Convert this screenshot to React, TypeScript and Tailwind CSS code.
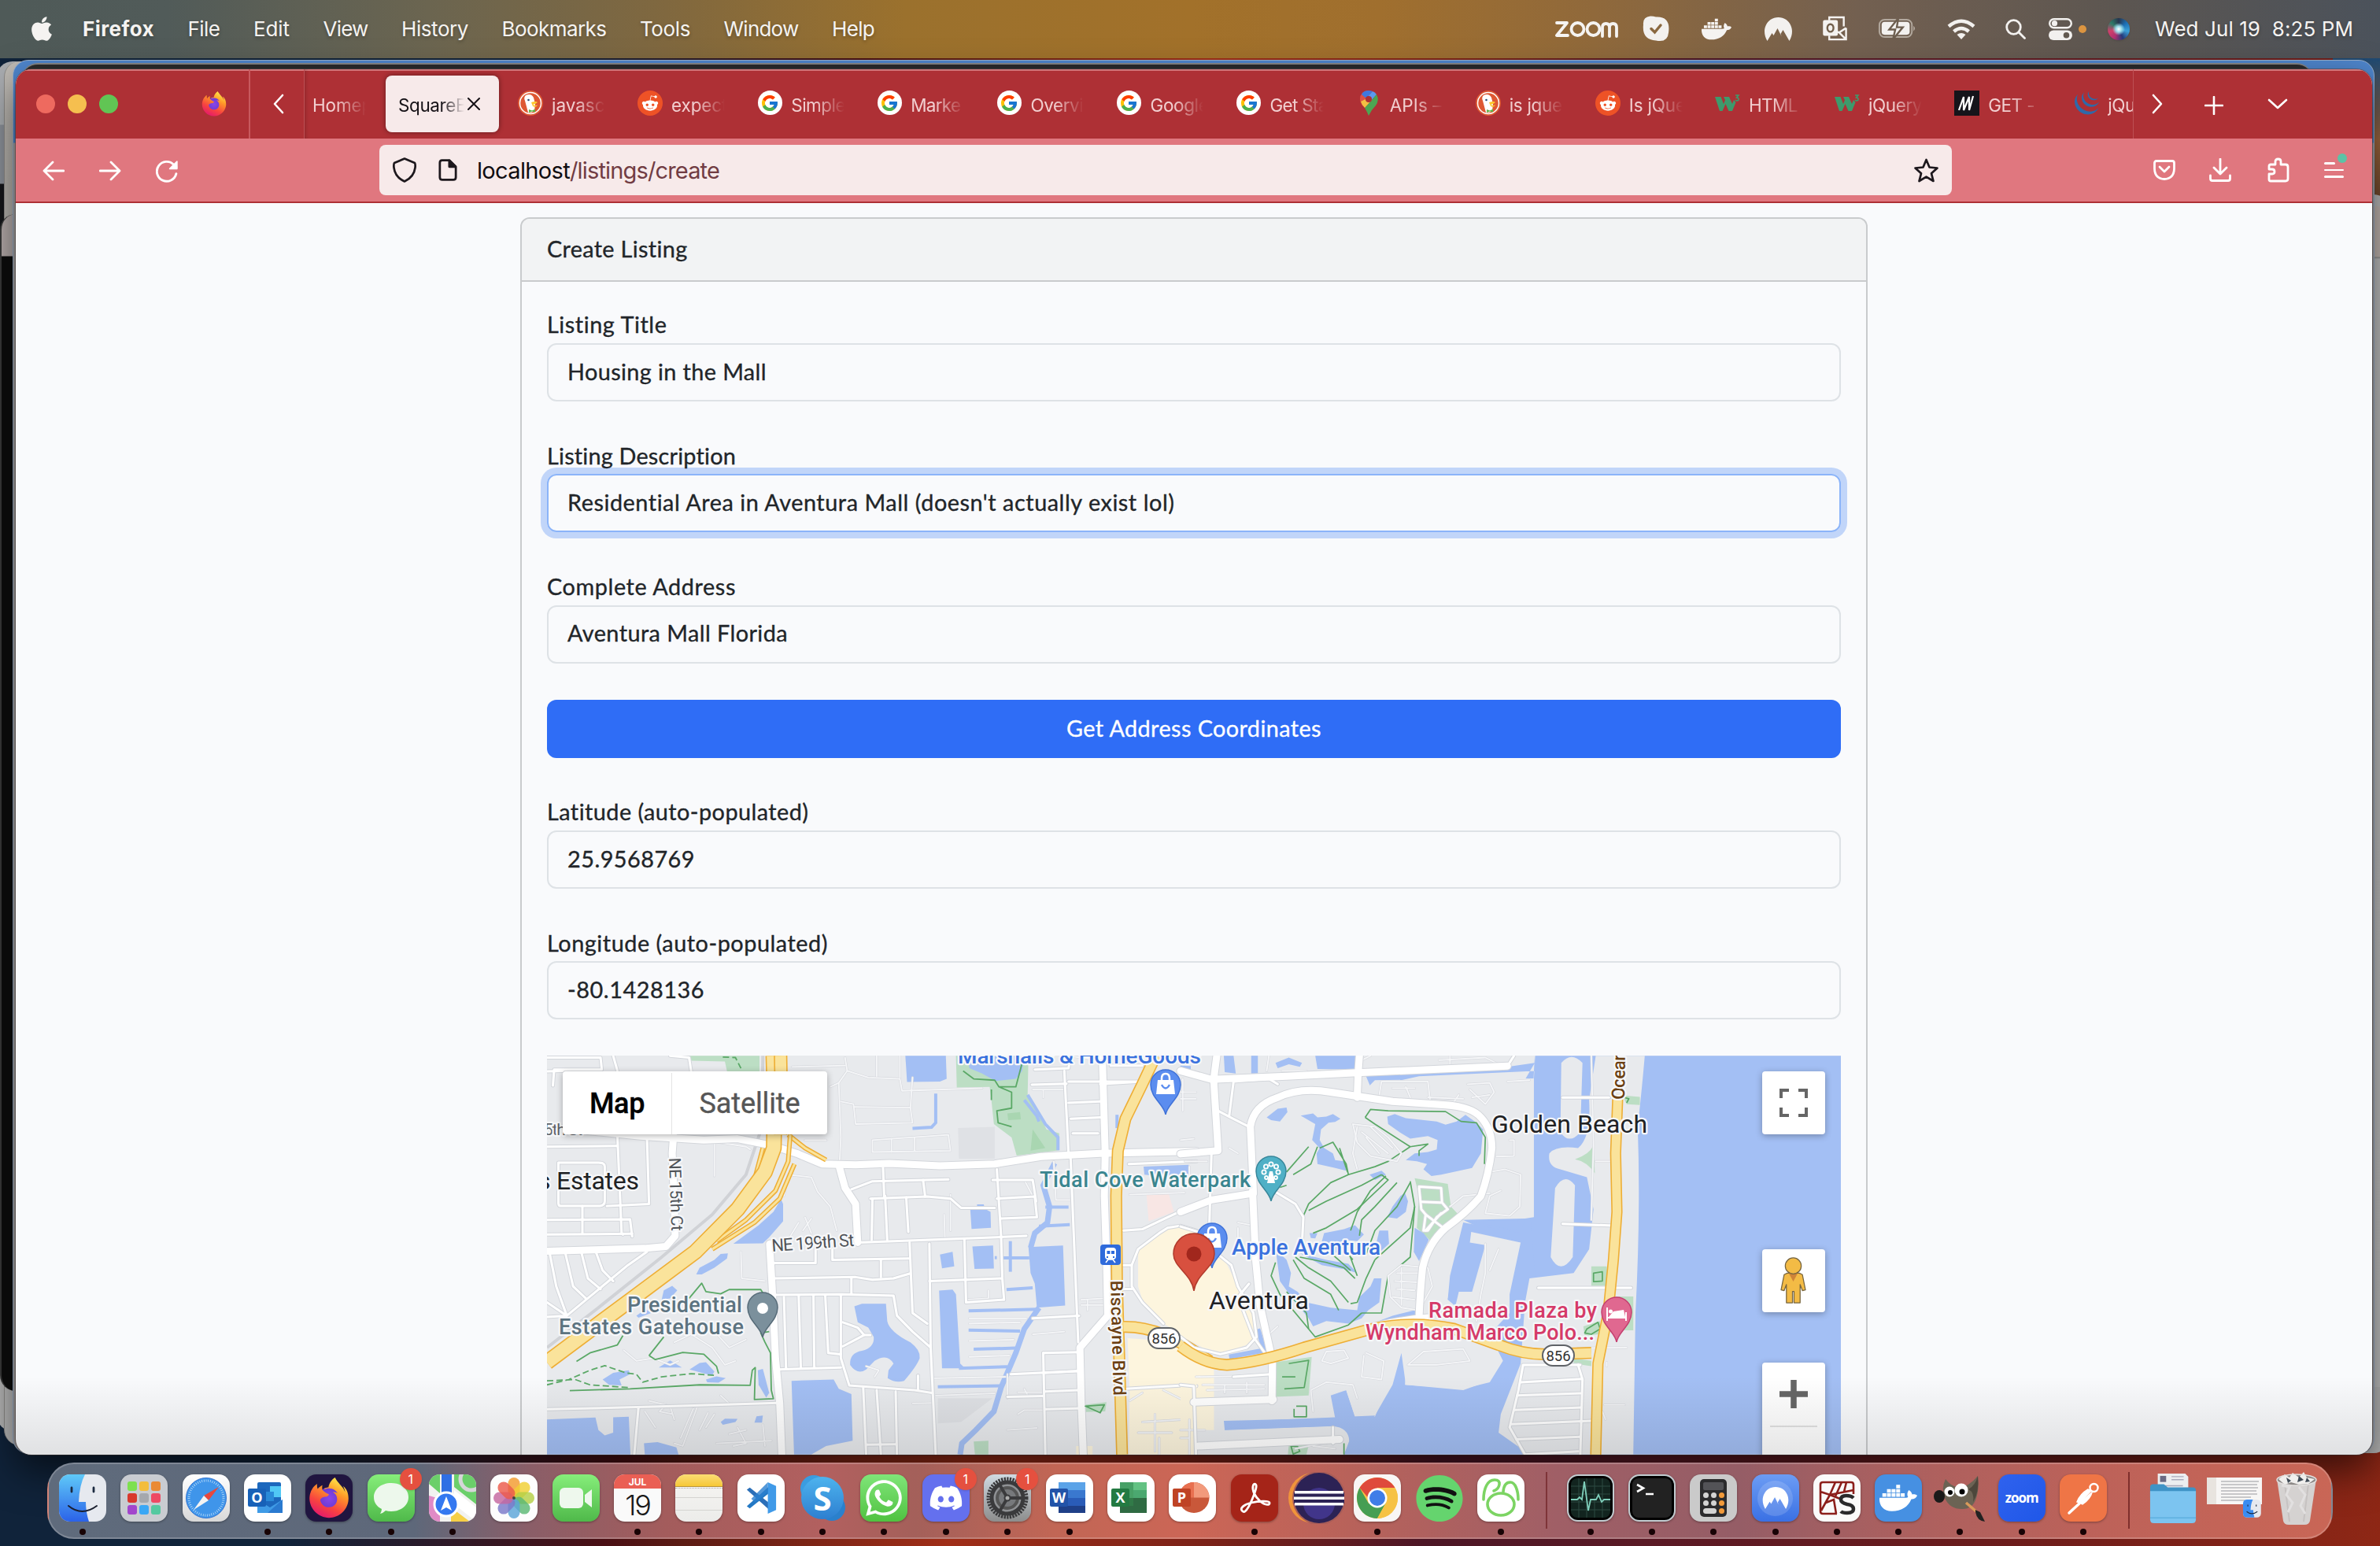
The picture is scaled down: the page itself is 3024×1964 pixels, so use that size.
import React, { useLayoutEffect, useRef, useState } from "react";
import { FaApple, FaDocker, FaRedditAlien, FaWhatsapp, FaDiscord, FaSpotify, FaFirefoxBrowser } from "react-icons/fa";
import { FcGoogle } from "react-icons/fc";
import { SiJquery } from "react-icons/si";

/* Text whose tracking is computed so that the line is exactly `w` pixels wide. */
function Tracked({ w, children, className = "" }: { w: number; children: string; className?: string }) {
  const ref = useRef<HTMLSpanElement>(null);
  const [ls, setLs] = useState(0);
  useLayoutEffect(() => {
    const el = ref.current;
    if (!el) return;
    el.style.letterSpacing = "0px";
    const natural = el.getBoundingClientRect().width;
    const v = (w - natural) / children.length;
    el.style.letterSpacing = v + "px";
    setLs(v);
  }, [w, children]);
  return (
    <span ref={ref} className={"inline-block whitespace-pre " + className} style={{ letterSpacing: ls + "px" }}>
      {children}
    </span>
  );
}

/* ---------- Menu bar ---------- */

const NordPeak = ({ className = "", fill = "#f3f1ef" }: { className?: string; fill?: string }) => (
  <svg viewBox="0 0 36 30" className={className}>
    <path d="M4 30C-2 20 0 9 8 3c6-4 14-4 20 0 8 6 10 17 4 27l-8-14-3 5 1 3-5-10-5 9-2-3z" fill={fill} />
  </svg>
);

function MenuBar() {
  const items: [string, number][] = [["File", 41], ["Edit", 46], ["View", 57], ["History", 85], ["Bookmarks", 133], ["Tools", 64], ["Window", 95], ["Help", 54]];
  return (
    <header className="relative flex h-[74px] items-center justify-between bg-[linear-gradient(90deg,#4f5a58_0%,#515b59_7%,#6b6550_18%,#80683f_28%,#9b712d_38%,#a2712a_50%,#a06f2e_58%,#90693b_67%,#736050_78%,#5c5651_89%,#4b525b_100%)] pb-px pl-[39px] pr-[34px] text-[26px] text-[#f5f3f1] [text-shadow:0_2px_4px_rgba(0,0,0,0.3)]">
      <nav className="flex items-center gap-[42.5px]">
        <div className="flex items-center gap-[38px]">
          <FaApple className="h-[35px] w-[28px]" />
          <Tracked w={91} className="font-bold">Firefox</Tracked>
        </div>
        {items.map(([t, w]) => <Tracked key={t} w={w}>{t}</Tracked>)}
      </nav>
      <div className="flex items-center">
        <svg viewBox="0 0 80 22" className="h-[22px] w-[80px]" fill="none" stroke="#f5f3f1" strokeWidth="3.800" strokeLinejoin="round" strokeLinecap="round">
          <path d="M2 3h13L2 19h14" />
          <circle cx="28.500" cy="11" r="8" />
          <circle cx="48.500" cy="11" r="8" />
          <path d="M60 20V9q0-5 4.500-5T69 9v11M69 9q0-5 4.500-5T78 9v11" />
        </svg>
        <svg viewBox="0 0 34 32" className="ml-[31px] h-[33px] w-[34px]">
          <path d="M10 0q-10 1-9 11Q-1 30 17 31q15 3 16-10Q36 0 17 1q-3-1-7-1z" fill="#f3f1ef" />
          <path d="M11 16l4.500 4.500 7.500-9" fill="none" stroke="#8a6840" strokeWidth="3.500" strokeLinecap="round" />
        </svg>
        <FaDocker className="ml-[41px] h-[40px] w-[38px]" />
        <NordPeak className="ml-[41px] h-[30px] w-[37px]" />
        <svg viewBox="0 0 34 34" className="ml-[37px] h-[33px] w-[34px]" fill="none" stroke="#f5f3f1" strokeWidth="2.500">
          <path d="M9 6V2h19v12M31 16v15H9v-5M31 16l-9 6-5-2M22 22l9 9" />
          <rect x="2" y="7" width="17" height="18" rx="1" fill="#f3f1ef" />
          <ellipse cx="10.500" cy="16" rx="4" ry="5" stroke="#72604d" />
        </svg>
        <svg viewBox="0 0 50 26" className="ml-[37px] h-[25px] w-[50px]">
          <rect x="1" y="1" width="43" height="23" rx="7" fill="none" stroke="#b3a99e" strokeWidth="2" />
          <rect x="4" y="4" width="37" height="17" rx="4" fill="#f3f1ef" />
          <path d="M46 9q4 3.500 0 7z" fill="#b3a99e" />
          <path d="M26-1L14 14h8l-3 13L32 11h-8z" fill="#f3f1ef" stroke="#6d5e4f" strokeWidth="2.500" />
        </svg>
        <svg viewBox="0 0 36 26" className="ml-[38px] h-[26px] w-[36px]" fill="none" stroke="#f3f1ef" strokeWidth="4.500">
          <path d="M2 9.500Q18-4 34 9.500M8.500 16Q18 8 27.500 16" />
          <path d="M12.500 20Q18 16 23.500 20L18 26z" fill="#f3f1ef" stroke="none" />
        </svg>
        <svg viewBox="0 0 26 26" className="ml-[38px] h-[26px] w-[26px]" fill="none" stroke="#f3f1ef" strokeWidth="2.800" strokeLinecap="round">
          <circle cx="10.500" cy="10.500" r="8.800" /><path d="M17 17l7.500 7.500" />
        </svg>
        <svg viewBox="0 0 30 28" className="ml-[29px] h-[28px] w-[30px]">
          <rect x="1.200" y="1.200" width="27.600" height="11" rx="5.500" fill="none" stroke="#f3f1ef" strokeWidth="2.400" />
          <circle cx="7.500" cy="6.700" r="3.600" fill="#f3f1ef" />
          <rect x="0" y="15.500" width="30" height="12.500" rx="6.200" fill="#f3f1ef" />
          <circle cx="22.500" cy="21.700" r="3.800" fill="#62594f" />
        </svg>
        <div className="ml-[8px] size-[10px] rounded-full bg-[#dc9540]" />
        <div className="ml-[27px] size-[28px] rounded-full bg-[radial-gradient(circle_at_50%_50%,#fff_0,#9adbe8_18%,transparent_40%),conic-gradient(from_0deg,#27354d,#1c6fb5,#3aa0d8,#253a7a,#b03070,#d0406a,#2f7a68,#27354d)] shadow" />
        <Tracked w={252} className="ml-[32px]">{"Wed Jul 19  8:25 PM"}</Tracked>
      </div>
    </header>
  );
}

/* ---------- Browser tabs ---------- */

const DuckIcon = () => (
  <svg viewBox="0 0 32 32" className="size-8 shrink-0">
    <circle cx="16" cy="16" r="16" fill="#de5833" />
    <circle cx="16" cy="16" r="13.500" fill="none" stroke="#fff" strokeWidth="1.500" />
    <path d="M10 6q7-3 10 3l2 8-1 9q-5 3-8 2L9 13q-2-4 1-7z" fill="#fff" />
    <circle cx="13.500" cy="12" r="1.300" fill="#2b4f78" />
    <path d="M17 15q6-2 8 0-2 2-6 3 4 2 6 0-1 4-6 2z" fill="#fdc82f" />
    <path d="M14 24l4 1.500 4-2v4l-4-1-4 1.500z" fill="#5fb444" />
  </svg>
);
const RedditIcon = () => (
  <span className="flex size-8 shrink-0 items-center justify-center rounded-full bg-[#ee5226]"><FaRedditAlien className="size-[22px] text-white" /></span>
);
const GoogleIcon = () => (
  <span className="flex size-[31px] shrink-0 items-center justify-center rounded-full bg-white"><FcGoogle className="size-[24px]" /></span>
);
const PinIcon = () => (
  <svg viewBox="0 0 32 32" className="size-8 shrink-0">
    <path d="M16 0Q5 1 5 11q0 4 4 9l4-6z" fill="#de5145" /><path d="M16 0Q9 0 7 5l6 5 8-9q-2-1-5-1z" fill="#4078e0" />
    <path d="M21 1l-9 10 8 1 6-7q-2-3-5-4z" fill="#5a9af0" /><path d="M20 12l6-7q4 7-1 14-6 6-9 13-2-5-5-10z" fill="#4ca552" />
    <path d="M6 14q1 4 5 8l9-10-8-1z" fill="#f3bf43" /><circle cx="16" cy="11" r="4" fill="#ae3035" />
  </svg>
);
const W3Icon = () => (
  <svg viewBox="0 0 32 32" className="size-8 shrink-0" fill="#3e9a6c">
    <path d="M0 8h7.500l3.500 9 2-5-2-4h7l4 9 2-5 2.500 3-4.500 11h-4.500l-4-9-4 9H6z" />
    <path d="M26 6h4l-2.500 3q3 0 2.500 3-2 2-4 0" fill="none" stroke="#3e9a6c" strokeWidth="1.600" />
  </svg>
);
const MdnIcon = () => (
  <span className="flex size-8 shrink-0 items-center justify-center bg-[#15141a]">
    <svg viewBox="0 0 22 20" className="h-5 w-[22px]" fill="none" stroke="#fff" strokeWidth="2.200"><path d="M1 19L7 2v17L14 2v17l5-18" /></svg>
  </span>
);
const JqIcon = () => <SiJquery className="size-[31px] shrink-0 text-[#2f69a8]" />;

const tabs: [React.ComponentType, string, number][] = [
  [DuckIcon, "javascr", 76], [RedditIcon, "expect", 71], [GoogleIcon, "Simple", 69], [GoogleIcon, "Marke", 63], [GoogleIcon, "Overvi", 67], [GoogleIcon, "Google", 74],
  [GoogleIcon, "Get Sta", 73], [PinIcon, "APIs –", 66], [DuckIcon, "is jque", 67], [RedditIcon, "Is jQue", 72], [W3Icon, "HTML", 62], [W3Icon, "jQuery", 68], [MdnIcon, "GET -", 59], [JqIcon, "jQuery", 68],
];

const fade = "[mask-image:linear-gradient(90deg,#000_45%,transparent_100%)]";

const FirefoxLogo = ({ className }: { className: string }) => (
  <span className={"relative inline-flex shrink-0 items-center justify-center " + className}>
    <svg className="absolute size-0"><defs>
      <linearGradient id="fx" x1="0.8" y1="0" x2="0.3" y2="1"><stop offset="0" stopColor="#fff44f" /><stop offset="0.35" stopColor="#ff9a28" /><stop offset="0.7" stopColor="#f8443f" /><stop offset="1" stopColor="#e3186e" /></linearGradient>
    </defs></svg>
    <span className="absolute size-[55%] translate-y-[2%] rounded-full bg-[radial-gradient(circle,#8a45e8,#5a35c8)]" />
    <FaFirefoxBrowser className="relative size-full" fill="url(#fx)" />
  </span>
);

function TabStrip() {
  return (
    <div className="flex h-[88px] shrink-0 items-stretch bg-[#ae3035] text-[22.500px] shadow-[inset_0_2px_0_#d2777b]">
      <div className="flex w-[298px] items-center border-r-2 border-[#c8595e] pl-[26px]">
        <i className="size-[24px] rounded-full bg-[#ee6a5f]" />
        <i className="ml-[16px] size-[24px] rounded-full bg-[#f5bf4f]" />
        <i className="ml-[16px] size-[24px] rounded-full bg-[#61c554]" />
        <FirefoxLogo className="ml-[106px] size-[32px]" />
      </div>
      <div className="flex w-[69px] items-center justify-center border-r border-[#bd5054] pl-[4px]">
        <svg viewBox="0 0 14 26" className="h-[26px] w-[14px]" fill="none" stroke="#fff" strokeWidth="2.600" strokeLinecap="round" strokeLinejoin="round"><path d="M12 2L2 13l10 11" /></svg>
      </div>
      <div className="flex min-w-0 flex-1 items-center overflow-hidden shadow-[inset_4px_0_4px_-2px_rgba(0,0,0,0.15)]">
        <div className="w-[99px] shrink-0 overflow-hidden pl-[10px] pt-[3px]">
          <div className={"w-[68px] overflow-hidden text-[#f2cfd0] " + fade}><Tracked w={76}>Homep</Tracked></div>
        </div>
        <div className="flex w-[152px] shrink-0 justify-center">
          <div className="flex h-[72px] w-[144px] items-center rounded-[8px] bg-[#f7eaea] pl-[16px] pt-[3px] text-[#151116] shadow-[0_0_6px_rgba(0,0,0,0.45)]">
            <div className="w-[84px] overflow-hidden [mask-image:linear-gradient(90deg,#000_65%,transparent_100%)]"><Tracked w={86}>SquareE</Tracked></div>
            <svg viewBox="0 0 16 16" className="mb-[4px] ml-[4px] size-[16px]" stroke="#151116" strokeWidth="2" strokeLinecap="round"><path d="M1 1l14 14M15 1L1 15" /></svg>
          </div>
        </div>
        {tabs.map(([Icon, t, w], i) => (
          <div key={i} className="flex w-[152.100px] shrink-0 items-center pl-[20px]">
            <span className="mb-[3px] flex w-8 justify-center"><Icon /></span>
            <div className={"ml-[11px] mt-[3px] w-[68px] overflow-hidden text-[#f2cfd0] " + fade}><Tracked w={w}>{t}</Tracked></div>
          </div>
        ))}
      </div>
      <div className="flex w-[304px] items-center border-l border-[#bd5054] pl-[23px]">
        <svg viewBox="0 0 14 26" className="h-[26px] w-[14px]" fill="none" stroke="#fff" strokeWidth="2.600" strokeLinecap="round" strokeLinejoin="round"><path d="M2 2l10 11L2 24" /></svg>
        <svg viewBox="0 0 24 24" className="ml-[53px] mt-[3px] size-[24px]" stroke="#fff" strokeWidth="2.600" strokeLinecap="round"><path d="M12 1v22M1 12h22" /></svg>
        <svg viewBox="0 0 26 14" className="ml-[56px] h-[14px] w-[26px]" fill="none" stroke="#fff" strokeWidth="2.600" strokeLinecap="round" strokeLinejoin="round"><path d="M2 2l11 10L24 2" /></svg>
      </div>
    </div>
  );
}

function Toolbar() {
  const line = { fill: "none", stroke: "#fff", strokeWidth: 2.8, strokeLinecap: "round" as const, strokeLinejoin: "round" as const };
  return (
    <div className="flex h-[82px] shrink-0 items-center border-b-2 border-[#ae3035] bg-[#e0777f] pl-[34px]">
      <svg viewBox="0 0 28 26" className="mt-[2px] h-[26px] w-[28px]" {...line}><path d="M27 13H2M13 2L2 13l11 11" /></svg>
      <svg viewBox="0 0 28 26" className="ml-[44px] mt-[2px] h-[26px] w-[28px]" {...line}><path d="M1 13h25M15 2l11 11-11 11" /></svg>
      <svg viewBox="0 0 28 28" className="ml-[44px] mt-[3px] size-[29px]" {...line}><path d="M25 17a12 12 0 1 1-3-11l3 3" /><path d="M26 2v9h-9z" fill="#fff" strokeWidth="1.500" /></svg>
      <div className="ml-[255px] flex h-[64px] w-[1998px] items-center rounded-[8px] bg-[#f7eaea] pl-[17px] pr-[16px] text-[29px]">
        <svg viewBox="0 0 30 32" className="h-[32px] w-[30px]" fill="none" stroke="#1d181d" strokeWidth="2.700" strokeLinejoin="round"><path d="M15 1.500L28 7q1 2 .5 6Q27 25 15 30.500 3 25 1.500 13 1 9 2 7z" /></svg>
        <svg viewBox="0 0 26 30" className="ml-[28px] h-[28px] w-[24px]" fill="none" stroke="#1d181d" strokeWidth="3" strokeLinejoin="round"><path d="M5 1.500h10l9 9V25q0 3.500-3.500 3.500h-15Q2 28.500 2 25V5q0-3.500 3-3.500z" /><path d="M15 2v8.500h8.500z" fill="#1d181d" /></svg>
        <div className="ml-[25px] mt-[2px] flex"><Tracked w={118} className="text-[#100c10]">localhost</Tracked><Tracked w={190} className="text-[#713c43]">/listings/create</Tracked></div>
        <svg viewBox="0 0 32 31" className="ml-auto h-[31px] w-[33px]" fill="none" stroke="#1d181d" strokeWidth="2.700" strokeLinejoin="round"><path d="M16 2l4 9.500 10 1-7.500 6.800L25 29l-9-5.300L7 29l2.500-9.700L2 12.500l10-1z" /></svg>
      </div>
      <svg viewBox="0 0 28 26" className="ml-[256px] h-[26px] w-[28px]" {...line}><path d="M4 1.500h20q2.500 0 2.500 2.500v7.500Q26 24 14 24.500 2 24 1.500 11.500V4q0-2.500 2.500-2.500zM8 9l6 6 6-6" /></svg>
      <svg viewBox="0 0 28 30" className="ml-[43px] h-[30px] w-[28px]" {...line}><path d="M14 1v19M6 12l8 8 8-8M1.500 22v4q0 2.500 2.500 2.500h20q2.500 0 2.500-2.500v-4" /></svg>
      <svg viewBox="0 0 28 32" className="ml-[46px] h-[32px] w-[28px]" {...line}><path d="M10 9V5q0-3 3.500-3T17 5v4h6q3 0 3 3v15q0 3-3 3H4q-2 0-2-2v-7h4q3 0 3-3t-3-3H2v-4q0-2 2-2z" /></svg>
      <div className="relative ml-[44px] flex h-[20px] w-[25px] flex-col justify-between">
        <i className="h-[2.600px] w-[14px] rounded bg-white" /><i className="h-[2.600px] rounded bg-white" /><i className="h-[2.600px] rounded bg-white" />
        <i className="absolute -top-[11px] left-[17px] size-[12px] rounded-full bg-[#5cc3a6]" />
      </div>
    </div>
  );
}

/* ---------- Map ---------- */

const WATER = "#a3bff4", PARK = "#bcdec4", TRAIL = "#5aa866";

/* West part of the map. */
const westWater = [
  "M878 33H974L976 120 960 130 882 132z",
  "M583 572L588 590V655L555 715 540 738 470 740 500 705 530 670 565 620z",
  "M382 855L390 830 425 800 440 778 457 776 455 795 425 830 395 855z",
  "M305 915L325 898 337 915 320 945 300 950z", "M240 1010L262 985 275 1000 245 1018z",
  "M960 780L990 770 994 825 965 832z", "M1037 750L1086 746 1088 833 1042 834z",
  "M1032 612L1048 610V592H1064L1066 608 1080 620 1081 680 1035 684z",
  "M1170 752L1252 746 1257 972 1190 980 1185 890 1175 850z",
  "M958 916L990 912 998 930 1008 1190 1020 1208 965 1208z",
  "M757 975L775 965H832L835 1030Q840 1070 890 1110 915 1140 912 1170 905 1200 875 1255 855 1265 836 1245L838 1215 850 1190Q835 1150 805 1180L785 1212Q765 1235 747 1195 745 1150 775 1142 805 1130 803 1090L790 1055 765 1035z",
  "M608 1255L708 1250 720 1285 750 1305 753 1480 690 1500 655 1532H614z",
  "M28 1400L143 1393 150 1440 165 1460 185 1450V1392L222 1390 226 1532H28z",
  "M258 1490L290 1485 335 1505 340 1532H260z",
  "M160 1250L185 1225 222 1215 225 1230 200 1250 205 1272 175 1270z",
  "M293 1205L320 1178 348 1205z", "M366 1212L390 1188 405 1185 425 1220 420 1235 395 1225z", "M405 1250L430 1238 452 1245 435 1262 408 1260z",
  "M528 1215L540 1210 555 1300 548 1318 530 1270z", "M440 1410L450 1397 480 1398 475 1410 445 1420z", "M520 1412L525 1388 540 1385 538 1412z",
  "M1443 450L1550 443V485L1500 490 1445 480z", "M1530 70L1555 72V100H1535z",
];
const westCanals = [
  "M1232 437L1205 520 1220 600 1215 660 1185 700 1175 755", "M1195 980L1160 1060 1140 1150 1105 1280 1088 1370 1045 1440 1012 1490 1008 1532",
  "M1210 602H1265", "M1195 674L1268 668", "M1110 793H1172", "M1127 730V845", "M1118 912L1180 905", "M1028 992L1190 986", "M1028 1064L1150 1068", "M1040 1136L1140 1132", "M1005 1208L1120 1202", "M955 1277L1105 1274",
  "M950 175V285L940 302 895 306", "M1160 200L1190 260 1195 280", "M1168 180L1210 290 1240 340V388", "M1380 255V305", "M1090 792H1095",
];
const westMajor = [
  "M28 300L250 335 400 350 480 345 560 370 620 400 680 440 760 443 840 438 960 447 1090 440 1200 412 1340 400 1568 392",
  "M722 455L735 530 760 590 765 735", "M556 740L562 900 570 1170 580 1340 585 1532", "M1345 33L1352 400 1350 560 1355 800 1358 1010 1292 1130 1295 1330 1300 1532",
  "M28 768L260 757 310 750 332 710 330 580 325 400 328 335",
];
const westMinor = [
  "M565 870L760 865 800 875 850 870 888 852", "M570 932L725 930 850 935 858 1010 895 1070 938 1130", "M765 735L1095 715 1165 710", "M575 1212L725 1205",
  "M725 935V1170L745 1272 900 1290 940 1300", "M888 735L895 1000 930 1040", "M935 740L938 1130 950 1532", "M1018 722L1022 960", "M1095 460L1105 710 1108 870 1112 950", "M935 880L1108 870",
  "M28 375L195 372", "M195 335L205 700 208 705", "M28 650L225 648 230 712", "M28 705L230 702", "M55 435H150Q165 435 165 450V580Q165 598 150 598H60Q55 598 55 585z", "M265 335L270 590 170 598", "M112 598V700",
  "M35 780L50 900 75 1010 220 820 265 770", "M72 778L90 900 120 945", "M110 775L125 870 155 910", "M145 775L160 840 185 880", "M28 960L75 1010 28 1015",
  "M565 812L665 812V760", "M705 760V800L885 795", "M820 800V865", "M750 870V930", "M590 940L595 1210", "M625 935L630 1205", "M660 935L662 1205", "M688 935L695 1150 725 1155",
  "M28 1362L330 1350 575 1338", "M245 1355L235 1532", "M730 1035L765 1055 780 1083 730 1125", "M780 1083H795", "M778 1280L785 1532", "M810 1290L820 1532", "M855 1295L858 1532", "M785 1495L855 1493", "M908 1235V1290",
  "M1255 90L1265 400 1270 420 1285 1000 1288 1110", "M1095 570L1185 562 1190 640 1105 645", "M1085 500H1180L1188 580", "M750 535L800 505 980 498", "M795 570L930 562 985 570 1010 605 1090 605", "M800 570L798 725", "M830 560L835 725", "M880 565L885 695", "M825 455L828 565", "M920 500L925 562",
  "M1265 210L1340 205", "M1270 270L1340 265", "M1265 130H1430", "M1178 142L1260 138", "M1185 85L1265 80 1270 35", "M1275 325H1335", "M1365 70H1440", "M1340 140L1440 130",
  "M1205 1150L1290 1147", "M1205 1150L1210 1532", "M1210 1225L1285 1218", "M1210 1295L1290 1290", "M1210 1362L1295 1358", "M1180 1020L1290 1010", "M1128 1230L1290 1218", "M1120 1315L1205 1312", "M1395 690L1440 685 1500 640 1568 590", "M1400 1285L1560 1270 1568 1275",
  "M1395 820H1415L1430 760 1480 700 1500 680 1530 672 1568 690", "M1415 820L1415 900 1440 960 1490 1040", "M1395 910H1415", "M28 40H155L158 85H45L42 145",
  "M320 33L365 40 370 92", "M28 92L65 90", "M185 33L195 90", "M1408 440L1568 430", "M1022 960L1112 950", "M1350 33V60",
];
const westFaint = [
  "M610 75L735 70", "M735 40L740 90 720 135 725 340 722 430", "M740 90L790 115 865 120 870 165 1060 155", "M720 135L700 150", "M725 205L755 215 760 290 895 285 890 230 895 115", "M755 225L890 228", "M800 350L980 330 985 390 800 395z", "M845 345V395", "M900 340V390", "M865 33V115", "M810 33V110",
  "M600 480L655 490 670 545 700 600 715 690", "M590 560L600 480", "M640 640L655 700M635 690L655 645M600 725L625 660", "M488 770L490 870 545 880", "M425 350V485", "M360 340L500 375 510 385", "M690 350H640",
  "M985 555L985 690", "M970 630L972 720", "M1270 35L1340 50", "M1230 430L1235 575H1268", "M1075 915V945L1020 950", "M1030 1020H1165M1030 1040L1150 1035M1030 1105L1135 1100M1030 1165L1125 1160",
  "M270 1330L310 1345 295 1370 325 1380M320 1350L330 1400M260 1370L285 1430M385 1350L350 1500 330 1490M440 1310L460 1340M375 1360L345 1470M410 1375L390 1440M425 1380L405 1430M460 1455L500 1440M430 1490L560 1480M480 1430L500 1490 470 1500M540 1420L545 1500",
  "M210 1140L240 1180 280 1170 320 1195 340 1180M330 1110L370 1080 420 1130 450 1195 475 1180M420 1060L460 1130 500 1100M360 1000L420 990",
  "M950 1310L1090 1302M945 1245L1115 1240M895 1340L945 1338M1120 1230V1320M1145 1298H1205M1160 1285L1170 1315M1180 1080L1255 1070M1295 950L1350 945M1180 160H1255M1205 160V190", "M1410 555L1540 548M1410 520H1440M1440 1410L1540 1400M1430 1450H1510M1470 1380V1520M1410 1330L1440 1300M1490 1290L1540 1330M1480 1470V1532",
  "M785 1200L815 1215 805 1240M1120 1440L1190 1432M1145 1380L1160 1365H1210M1160 500L1180 560M1295 970H1350M1310 990V950",
];
const westHighways: [string, number][] = [
  ["M565 33L568 200 566 380 545 470 480 610 380 770 240 935 28 1185", 17], ["M582 33L584 200 582 330", 14],
];
const westRamps = ["M600 330L640 380 690 425", "M605 330L600 430 570 540 500 650 430 730", "M540 380L520 500 470 610", "M615 440L580 570 520 660 420 760"];

/* East part of the map. */
const eastParks = [
  "M530 493L605 515 612 600 632 635 600 690 565 727 535 680 540 560z", "M935 370L938 475Q920 430 893 422 925 405 935 370z", "M930 825H965L968 898 930 898z", "M985 938H1025V1065H995z", "M912 1050L950 1030 948 1080 915 1085z",
  "M215 1185L297 1165 290 1310 212 1315z", "M245 1498L290 1498 285 1532H243z", "M1000 182L1040 188V218L1010 215z", "M890 1170L930 1180V1200L890 1190z",
];
const eastLakes = [
  "M195 265L220 232 240 228 242 245 225 280 205 275z", "M272 258L300 250 310 265 330 262 345 252 362 270 350 282 335 285 318 310 315 350 325 380 345 400 350 425 370 430 375 465 350 455 310 440 308 400 315 380 298 350 305 290z",
  "M468 262L485 252 510 268 580 280 600 292 625 280 645 255 670 285 685 310 680 400 660 455 590 480 568 485 550 460 558 440 535 430 510 425 530 400 560 395 580 385 582 350 560 335 520 345 500 325 470 290z",
  "M498 560L508 548 515 580 510 620 490 645 468 640 480 600z", "M428 480L455 465 465 480 440 500z", "M325 700L370 685 395 670 415 705 400 730 370 725 350 745 365 770 340 775 320 730z", "M292 700L310 700 305 720 295 718z",
  "M215 760L240 800 250 850 245 900 265 920 285 960 340 980 400 990 405 940 430 900 438 870 455 870 450 960 425 990 410 1020 380 1040 330 1030 300 1050 290 1020 255 950 225 880z",
  "M270 775L330 800 380 815 400 850 370 835 320 820z",
  "M450 690L470 690 472 740 445 780 440 760z", "M530 680L550 700 562 725 540 805 528 770z", "M305 33H397V85L310 83z", "M98 33L120 33 125 100 100 95z", "M215 60L245 40 275 60 270 75 245 65 220 80z", "M160 33H175V100H160z",
  "M370 1080L480 1010 530 990 540 1020 440 1035z",
];
const eastMajor = [
  "M0 90L70 122 240 110 400 97 740 72", "M82 33L75 122 85 390 0 402", "M405 33L402 100 400 190", "M0 620L70 575 165 550",
  "M165 550L158 300Q165 220 220 190 270 150 340 170L480 205 600 218Q660 225 680 265 705 310 705 380 698 480 680 560 650 620 600 680 560 740 548 830 542 930 540 1015",
  "M163 540L170 800 180 970 208 1180 207 1330", "M200 1160Q300 1130 400 1070 470 1030 560 1018", "M30 1335L210 1325", "M40 1500L360 1475",
];
const eastMinor = [
  "M0 675L50 700 85 780 115 820 130 900 165 1000 172 1090 150 1130 90 1155 30 1130 0 1090", "M0 1270L30 1275 35 1532", "M155 890L130 940 165 1090 195 1160", "M70 400L65 680", "M85 240L110 262 155 300", "M110 260L120 130 200 120 220 140", "M210 540L260 590 278 640 275 740",
  "M900 1195L910 1250 905 1532", "M775 1195H905", "M775 1200L765 1290 745 1430 780 1532", "M770 1260L910 1248", "M762 1310L905 1302", "M755 1365L908 1355", "M748 1418L930 1405", "M760 1475L905 1465", "M780 1532L900 1520",
  "M205 1230L120 1240", "M345 1430V1480M360 1470L345 1490", "M865 190L970 190", "M865 665L990 672", "M810 905L1020 905", "M540 525L590 530 592 585 605 610 580 640 560 690 550 690 555 630 545 610 540 530", "M545 582L590 585M555 630L595 680M555 690L590 625", "M740 72L755 33",
];
const eastFaint = [
  "M450 180L455 130 560 130 565 200M480 155H530M570 200L620 205 630 180M650 140L700 135 710 170 690 215 655 160M660 190L700 180M510 150L520 190M560 190L640 195M740 130L790 125M585 50L690 40 720 65M610 33V65",
  "M390 290L440 300 470 340 500 400 490 430 430 410 400 360zM410 320L470 400M420 340L450 400M430 300L480 380", "M745 350H755V410L715 412M700 470L735 460 770 480 768 600 745 635 690 625 700 560 725 540M610 600L640 560 700 550",
  "M470 860L500 820 560 830 570 900 540 990 500 980 475 940zM490 850L545 850M485 880L540 885M490 910L530 915M480 940L530 950M500 830V970",
  "M690 740L690 850 680 930 670 1030M720 760L700 840", "M515 1195L550 1145 640 1135 655 1180 580 1195zM420 1150L460 1180 455 1250 410 1240 415 1160", "M320 1180L330 1145 370 1140 380 1170 340 1190z", "M300 1370L295 1290 330 1260 390 1270 400 1320M35 1240L205 1235M50 1270H190M60 1290L190 1285M100 1270V1300M150 1260V1300M0 1440H55M20 1400V1532M0 1470H20M10 430H60M20 450V500M130 400L110 380M130 660L160 670M130 680V720M5 120V240M0 170H35M0 195H35",
  "M930 33L935 370 930 650M940 430H975M900 1132L1010 1130M960 1345H1005M955 1370L962 1400M965 1185V1200", "M220 1050L200 1080M0 350L30 345M410 50L430 33M400 300L390 400 400 460M200 33L195 90M230 90H285",
  "M265 1480L330 1490M300 1500L350 1510M260 1510L320 1490",
];
const eastTrails = [
  "M418 265L430 235 470 240 600 243 635 280 670 285 690 340 688 440", "M418 265L440 290 520 375 560 365 540 390V410", "M520 375L470 430 440 450 380 480 340 510 290 590 278 635", "M380 480L375 440 345 358 315 380M360 380L378 470", "M310 375L295 440 255 480M240 520L225 528M290 375L240 470",
  "M455 480L410 520 330 580 290 615M455 480L470 500 400 610 330 680 300 700", "M465 485L430 540 400 620 385 690M490 510L440 600 410 650 405 710M520 510L490 600 440 690 420 780M530 600L520 680 480 740 440 800", "M520 505L530 600 520 790 470 860 455 1000 410 1000M410 1000L380 1045 305 1090 280 1040 225 930 205 860 215 810",
  "M260 790L290 830 340 880 380 960M255 800L280 870 340 930 358 990M270 790L330 810 370 830 395 870M380 770L400 860M330 760L385 840M360 740L390 800", "M440 800L420 870 400 960 385 965M290 1060L285 1000 240 920", "M1005 190L1015 195 1010 210M935 850L955 845V880L935 882zM920 1060L945 1035 950 1060 930 1080 915 1075z",
  "M245 1190L290 1178 280 1280 235 1285M230 1240L260 1240M262 1350H285V1390H257V1360M250 1500L265 1502 270 1520 255 1530z M370 1490V1532",
];

function Road({ d, w, c = "#fff", cc = "#d3d6db", cw = 2 }: { d: string; w: number; c?: string; cc?: string; cw?: number }) {
  return (
    <g fill="none" strokeLinejoin="round">
      <path d={d} stroke={cc} strokeWidth={w + cw * 2} vectorEffect="non-scaling-stroke" />
      <path d={d} stroke={c} strokeWidth={w} vectorEffect="non-scaling-stroke" />
    </g>
  );
}

function Roads({ major, minor, faint }: { major: string[]; minor: string[]; faint: string[] }) {
  const all: [string[], number][] = [[minor, 3], [major, 9]];
  return (
    <g fill="none" strokeLinejoin="round" strokeLinecap="round">
      {faint.map((d) => <path key={d} d={d} stroke="#d6d8dd" strokeWidth="3" vectorEffect="non-scaling-stroke" />)}
      {faint.map((d) => <path key={d} d={d} stroke="#f5f6f8" strokeWidth="1.8" vectorEffect="non-scaling-stroke" />)}
      {all.map(([list, w]) => list.map((d) => <path key={d} d={d} stroke="#d3d6db" strokeWidth={w + 2} vectorEffect="non-scaling-stroke" />))}
      {all.map(([list, w]) => list.map((d) => <path key={d} d={d} stroke="#fff" strokeWidth={w} vectorEffect="non-scaling-stroke" />))}
    </g>
  );
}

function Pin({ x, y, fill, edge, children }: { x: number; y: number; fill: string; edge: string; children?: React.ReactNode }) {
  return (
    <g transform={`translate(${x} ${y})`}>
      <path d="M0 57C-2 44-19 36-19 19A19 19 0 0 1 19 19C19 36 2 44 0 57z" fill={fill} stroke={edge} strokeWidth="1.500" />
      {children}
    </g>
  );
}

const bag = <g><path d="M-10 13H10L12 31H-12z" fill="#fff" /><path d="M-5 15V11Q-5 5 0 5T5 11V15" fill="none" stroke="#fff" strokeWidth="2.500" /><path d="M-5 19Q0 28 5 19" fill="none" stroke="#5b8def" strokeWidth="2.500" /></g>;

function Label({ x, y, w, s, c, children, weight = 400, r = 0 }: { x: number; y: number; w: number; s: number; c: string; children: string; weight?: number; r?: number }) {
  return (
    <text x={x} y={y} transform={r ? `rotate(${r} ${x} ${y})` : undefined} textLength={w} fontSize={s} fontWeight={weight} fill={c} stroke="#f6f7f9" strokeWidth="4.500" strokeLinejoin="round" paintOrder="stroke">{children}</text>
  );
}

function Shield({ x, y }: { x: number; y: number }) {
  return (
    <g>
      <rect x={x - 20} y={y - 13} width="40" height="26" rx="13" fill="#fff" stroke="#5f6368" strokeWidth="2" />
      <text x={x} y={y + 6.5} fontSize="18.500" textAnchor="middle" fill="#333">856</text>
    </g>
  );
}

function MapDrawing() {
  return (
    <svg viewBox="0 0 1644 507" className="h-[507px] w-[1644px] font-[Roboto]">
      <rect width="1644" height="507" fill="#e8eaed" />
      <g transform="translate(-15 -11) scale(0.5357 0.338)">
        <path d="M360 33H532V92H455L450 55 370 52z M998 33H1170L1168 180 1190 240 1213 310 1243 325V388L1142 408 1130 340 1088 290 1082 200 1078 150 1000 152z M1040 1483L1075 1480V1532H1043z M1305 1345L1355 1335 1352 1370 1305 1372z" fill={PARK} />
        <path d="M1120 250L1150 245 1152 272 1122 275zM1180 310L1210 380 1175 390z" fill="#a9d6b1" />
        <path d="M1025 33H1160L1155 90 1140 120 1092 128 1060 100 1030 80z" fill={WATER} />
        <path d="M1003 305L1090 300V420H1005zM955 1320H1085L1010 1410 955 1415z" fill="#dfe1e5" />
        <path d="M1450 555L1502 548 1515 620 1455 655z" fill="#f8e6e4" />
        <path d="M1430 760L1500 685 1530 675 1590 700V1130L1490 1040 1440 950 1430 900z M1405 1095L1540 1110 1610 1190V1532H1408L1410 1300z M1283 1500H1322V1532H1283z" fill="#fdf5de" />
        {westWater.map((d) => <path key={d} d={d} fill={WATER} />)}
        {westCanals.map((d, i) => <path key={d} d={d} fill="none" stroke={WATER} strokeWidth={i < 2 ? 7 : 4} vectorEffect="non-scaling-stroke" />)}
        <path d="M540 33L538 300 500 480 420 630 300 790 150 980 28 1130" fill="none" stroke="#d0d2d6" strokeWidth="4" vectorEffect="non-scaling-stroke" />
        <Roads major={westMajor} minor={westMinor} faint={westFaint} />
        <g fill="none" stroke={TRAIL} strokeWidth="1.800" strokeLinejoin="round">
          <path d="M365 945L395 888 405 920 440 928 460 912 535 912 550 950M555 1070L535 1075 545 1110 558 1150 560 1290 565 1322 520 1325 522 1205 515 1215 510 1272 390 1270 225 1285 82 1292M98 1182L130 1150 195 1120 208 1085M270 1160L305 1090M270 1160L285 1175 350 1148 400 1155 430 1200 435 1228" vectorEffect="non-scaling-stroke" />
          <path d="M28 1270L80 1250 130 1215 165 1198 215 1225 240 1230 255 1260 300 1240 370 1228 430 1235M28 1255L95 1250 130 1270 220 1280M445 38L475 40 488 80" strokeDasharray="8 4" vectorEffect="non-scaling-stroke" />
          <path d="M1015 90L1040 120 1090 125 1100 150 1140 150 1155 60M1100 150L1130 170V230L1095 240 1098 285 1130 300M1082 160V200M1305 1350L1350 1345 1340 1375z" vectorEffect="non-scaling-stroke" />
        </g>
        {westRamps.map((d) => <Road key={d} d={d} w={3} c="#fae39b" cc="#eeae35" cw={1.5} />)}
        {westHighways.map(([d, w]) => <Road key={d} d={d} w={w} c="#fae39b" cc="#eeae35" cw={1.6} />)}
        <Road d="M1472 33L1440 140 1400 270 1382 390 1378 560 1380 900 1384 1100 1392 1532" w={12} c="#fae39b" cc="#eeae35" cw={1.6} />
        <Road d="M1395 1052Q1440 1050 1490 1080L1540 1120 1600 1180" w={12} c="#fae39b" cc="#eeae35" cw={1.6} />
      </g>
      <g transform="translate(805 -11) scale(0.5612 0.338)">
        <path d="M0 690L60 730 100 800 130 900 165 990 165 1110 100 1150 50 1130 0 1085z M0 1160L36 1200V1532H0z" fill="#fdf5de" />
        <path d="M803 33H1500V1532H370L385 1460Q390 1430 340 1425L100 1440 98 1405 350 1395 340 1310 375 1290 395 1390H440L470 1270 500 1150 510 1270 640 1290 690 1260 720 1170 700 1010 605 950 610 900 640 740 700 760 690 690 640 650 780 640 790 400z" fill={WATER} />
        <path d="M580 690L640 650 760 690 765 640 790 400 802 33 803 90 540 110 430 150 420 110 740 75 802 60z" fill={WATER} />
        <path d="M640 660L770 700 790 600 805 900 740 1120 690 1260 720 1170 740 1010 700 1060 640 1000 605 950 610 860z" fill={WATER} />
        <path d="M425 150L440 125 800 118V640L780 645 640 650 560 560 420 300z" fill="#e8eaed" />
        <path d="M862 60Q885 15 910 60L905 320Q880 370 860 320zM848 530Q870 470 893 520L888 790Q860 860 838 790z" fill="#e8eaed" />
        <path d="M940 33H1051Q1045 150 1035 300 1042 620 1030 1000L1025 1532H790L720 1450 725 1380 770 1190 780 960 790 870 890 850 925 760 935 610 920 490 860 460 Q830 450 835 400 850 370 900 380 930 340 925 200z" fill="#e8eaed" />
        <path d="M658 695L770 735 745 930 745 1000 700 1080 730 1180 700 1260 640 1285 508 1270 515 1130 560 1060 610 1060 630 920 660 920 690 745 655 735z" fill="#e8eaed" />
        <path d="M335 1300L375 1290 395 1390 440 1385 480 1270 500 1150 540 1050 600 1040 400 1100 300 1180 300 1310zM100 1440L345 1425Q385 1430 382 1480L370 1532H30V1440z" fill="#e8eaed" />
        <path d="M100 1410L380 1390 440 1385 400 1532 382 1480Q380 1430 345 1425L100 1440z" fill={WATER} />
        {eastParks.map((d) => <path key={d} d={d} fill={PARK} />)}
        {eastLakes.map((d) => <path key={d} d={d} fill={WATER} />)}
        <path d="M175 1060L190 1140 110 1165" fill="none" stroke={WATER} strokeWidth="6" vectorEffect="non-scaling-stroke" />
        <g fill="none" stroke={TRAIL} strokeWidth="1.700" strokeLinejoin="round">{eastTrails.map((d) => <path key={d} d={d} vectorEffect="non-scaling-stroke" />)}</g>
        <Roads major={eastMajor} minor={eastMinor} faint={eastFaint} />
        <Road d="M0 1125Q50 1190 105 1195 180 1185 280 1130L420 1065Q520 1025 620 1060L720 1120Q780 1160 840 1155L930 1150" w={12} c="#fae39b" cc="#eeae35" cw={1.6} />
        <Road d="M990 180L985 400 988 620 980 800 968 1000 945 1190 940 1532" w={11} c="#fae39b" cc="#eeae35" cw={1.6} />
      </g>

      <Pin x={786} y={18} fill="#5b8def" edge="#3f72d8">{bag}</Pin>
      <Pin x={845} y={213} fill="#5b8def" edge="#3f72d8">{bag}</Pin>
      <Pin x={920} y={128} fill="#4fb0c6" edge="#37869a">
        <g fill="none" stroke="#fff" strokeWidth="1.800"><circle cx="0" cy="10" r="2.600" /><circle cx="-6.500" cy="13" r="2.600" /><circle cx="6.500" cy="13" r="2.600" /><circle cx="-9" cy="20" r="2.600" /><circle cx="9" cy="20" r="2.600" /><circle cx="-6" cy="27" r="2" /><circle cx="6" cy="27" r="2" /></g>
        <path d="M-5 34L-2 19H2L5 34z" fill="#fff" />
      </Pin>
      <Pin x={274} y={301} fill="#7b909c" edge="#566b78"><circle cx="0" cy="20" r="7" fill="#fff" /></Pin>
      <g>
        <rect x="703" y="240" width="26" height="26" rx="4" fill="#2f6bdb" />
        <rect x="709" y="244" width="14" height="15" rx="4" fill="#fff" />
        <path d="M711.500 248h4v4h-4zM717 248h4v4h-4zM711 255h2v2h-2zM719 255h2v2h-2z" fill="#2f6bdb" />
        <path d="M710 263l3-4h6l3 4" fill="none" stroke="#fff" strokeWidth="1.600" />
      </g>
      <Label x={522} y={10} w={309} s={28} c="#3b72de" weight={500}>Marshalls &amp; HomeGoods</Label>
      <Label x={-4} y={101} w={49} s={21} c="#5f6368">5th St</Label>
      <Label x={-12} y={170} w={129} s={32} c="#202124">s Estates</Label>
      <Label x={155} y={130} w={93} s={21} c="#4e5257" r={88}>NE 15th Ct</Label>
      <Label x={286} y={249} w={105} s={22} c="#4e5257" r={-4}>NE 199th St</Label>
      <Label x={102} y={326} w={146} s={27} c="#5c7380" weight={500}>Presidential</Label>
      <Label x={15} y={354} w={235} s={27} c="#5c7380" weight={500}>Estates Gatehouse</Label>
      <Label x={626} y={167} w={268} s={27} c="#3a858f" weight={500}>Tidal Cove Waterpark</Label>
      <Label x={870} y={253} w={189} s={28} c="#3b72de" weight={500}>Apple Aventura</Label>
      <Label x={841} y={322} w={127} s={32} c="#202124">Aventura</Label>
      <Label x={1200} y={98} w={198} s={32} c="#202124">Golden Beach</Label>
      <Label x={716} y={286} w={146} s={22} c="#6b3f12" weight={500} r={88.5}>Biscayne Blvd</Label>
      <Label x={1369} y={56} w={62} s={23} c="#6b3f12" weight={500} r={-89}>Ocean</Label>
      <Label x={1120} y={333} w={214} s={27} c="#d53a68" weight={500}>Ramada Plaza by</Label>
      <Label x={1040} y={361} w={291} s={27} c="#d53a68" weight={500}>Wyndham Marco Polo...</Label>
      <Pin x={1359} y={307} fill="#e06890" edge="#c43f70">
        <path d="M-12 13V30M-12 26H12M12 30V19" stroke="#fff" strokeWidth="2" fill="none" /><path d="M-4 18L9 16 11 25H-10z" fill="#fff" /><circle cx="-7.500" cy="18" r="2.500" fill="#fff" />
      </Pin>
      <Shield x={784} y={359} />
      <Shield x={1285} y={381} />
      <path d="M822 299C819 277 796 269 796 252A26 26 0 0 1 848 252C848 269 825 277 822 299z" fill="#d8503f" stroke="#b13a2c" strokeWidth="1.500" />
      <circle cx="822" cy="252" r="9.500" fill="#a1271d" />
    </svg>
  );
}

function MapView() {
  return (
    <div className="relative h-[507px] w-[1644px] overflow-hidden font-[Roboto]">
      <MapDrawing />
      <div className="absolute left-[20px] top-[20px] flex h-[80px] w-[336px] items-center rounded-[4px] bg-white pt-[2px] text-[36px] shadow-[0_2px_8px_rgba(0,0,0,0.3)]">
        <span className="flex h-full w-[139px] items-center justify-center border-r border-[#e4e4e4] font-medium text-black"><Tracked w={70}>Map</Tracked></span>
        <span className="flex flex-1 items-center justify-center text-[#565656]"><Tracked w={128}>Satellite</Tracked></span>
      </div>
      <div className="absolute right-[20px] top-[20px] flex flex-col">
        <div className="flex size-[80px] items-center justify-center rounded-[4px] bg-white shadow-[0_2px_8px_rgba(0,0,0,0.3)]">
          <svg viewBox="0 0 36 36" className="size-[36px]" fill="none" stroke="#666" strokeWidth="4"><path d="M2 12V2h10M24 2h10v10M34 24v10H24M12 34H2V24" /></svg>
        </div>
        <div className="mt-[146px] flex size-[80px] items-center justify-center rounded-[4px] bg-white shadow-[0_2px_8px_rgba(0,0,0,0.3)]">
          <svg viewBox="0 0 36 62" className="mr-[2px] h-[60px] w-[35px]" fill="#f3bb45" stroke="#77653f" strokeWidth="1.300" strokeLinejoin="round">
            <path d="M10 21h16l4 2 4 20-4 1-3-8v24h-8V45h-2v15H9V36l-3 8-4-1 4-20z" />
            <path d="M12 21h12l-6 11z" fill="#cf8338" stroke="none" />
            <circle cx="18" cy="11.500" r="10.500" />
          </svg>
        </div>
        <div className="mt-[64px] flex h-[140px] w-[80px] flex-col items-center rounded-[4px] bg-white shadow-[0_2px_8px_rgba(0,0,0,0.3)]">
          <svg viewBox="0 0 36 36" className="mt-[22px] size-[36px]" stroke="#666" strokeWidth="7.500"><path d="M18 0v36M0 18h36" /></svg>
          <div className="mt-[22px] h-[2px] w-[60px] bg-[#e2e2e2]" />
        </div>
      </div>
    </div>
  );
}

/* ---------- Page ---------- */

function Field({ label, lw, value, vw, focus = false }: { label: string; lw: number; value: string; vw: number; focus?: boolean }) {
  return (
    <div className="mb-[46.080px]">
      <div className="flex h-[46.080px] items-center"><Tracked w={lw}>{label}</Tracked></div>
      <div className={"flex h-[74.080px] items-center rounded-[12px] border-2 px-[24px] pb-px " + (focus ? "border-[#8bb4f9] shadow-[0_0_0_8px_#c1d5f9]" : "border-[#dee2e6]")}>
        <Tracked w={vw}>{value}</Tracked>
      </div>
    </div>
  );
}

function ListingCard() {
  return (
    <section className="mt-[18px] w-[1712px] rounded-t-[12px] border-x-2 border-t-2 border-[#c9cbcd] font-[Lato] text-[28.800px] text-[#212529] [-webkit-text-stroke:0.35px_currentColor]">
      <div className="flex h-[80px] items-center rounded-t-[10px] border-b-2 border-[#c9cbcd] bg-[#f2f3f4] px-[32px]"><Tracked w={179}>Create Listing</Tracked></div>
      <div className="px-[32px] pt-[32px]">
        <Field label="Listing Title" lw={153} value="Housing in the Mall" vw={253} />
        <Field label="Listing Description" lw={241} value="Residential Area in Aventura Mall (doesn't actually exist lol)" vw={772} focus />
        <Field label="Complete Address" lw={240} value="Aventura Mall Florida" vw={280} />
        <div className="mb-[46.080px] flex h-[74.080px] items-center justify-center rounded-[12px] bg-[#2f6df6] pb-px text-white"><Tracked w={324}>Get Address Coordinates</Tracked></div>
        <Field label="Latitude (auto-populated)" lw={333} value="25.9568769" vw={162} />
        <Field label="Longitude (auto-populated)" lw={357} value="-80.1428136" vw={174} />
        <MapView />
      </div>
    </section>
  );
}

function BrowserWindow() {
  return (
    <main className="absolute left-[20px] top-[88px] flex h-[1760px] w-[2994px] flex-col overflow-hidden rounded-[20px] bg-[#f9fafc] shadow-[0_20px_50px_rgba(0,0,0,0.6),0_0_0_1px_rgba(90,80,80,0.6)]">
      <TabStrip />
      <Toolbar />
      <div className="flex flex-1 justify-center overflow-hidden"><ListingCard /></div>
      <div className="pointer-events-none absolute inset-x-0 bottom-0 h-[100px] bg-linear-to-b from-transparent to-black/10" />
    </main>
  );
}

function BackgroundWindows() {
  return (
    <>
      <div className="absolute -left-[4px] top-[78px] h-[1740px] w-[90px] rounded-[20px] bg-[linear-gradient(#a9acb0_0,#a9acb0_80px,#8b9098_81px,#8b9098_155px,#15161a_156px,#15161a_220px,#b5b5b5_240px)]" />
      <div className="absolute left-[5px] top-[78px] h-[1758px] w-[2990px] rounded-[20px] border-l border-[#8d8b88] bg-[linear-gradient(#bdb9b3,#b5b1ab_160px,#b9b9b9_300px)]" />
      <div className="absolute left-[2900px] top-[247px] h-[1599px] w-[136px] rounded-[20px] bg-[#b9b9b9]" />
      <div className="absolute left-[2900px] top-[262px] h-[1500px] w-[140px] rounded-tr-[20px] bg-[linear-gradient(#c0b5af_0,#c0b5af_64px,#8d8d8d_65px,#bdbdbd_67px,#c1c1c1_100%)]" />
      <div className="absolute left-[0px] top-[272px] h-[1495px] w-[200px] rounded-[20px] border-l-2 border-[#3a3a3a] bg-[linear-gradient(#b7adac_0,#b7adac_53px,#0d0d0d_54px)]" />
      <div className="absolute left-[16px] top-[76px] h-[1771px] w-[3001px] rounded-[20px] border border-[#9ab0cc] bg-[linear-gradient(#4f86cd_0,#4f86cd_104px,#aaa6a6_105px)]" />
      <div className="absolute left-[28px] top-[80px] h-[100px] w-[2910px] rounded-[20px] border-t-2 border-[#868686] bg-[#2b2b2c]" />
    </>
  );
}

/* ---------- Dock ---------- */

const tile = "relative flex size-[60px] items-center justify-center overflow-hidden rounded-[14px] shadow-[0_1px_3px_rgba(0,0,0,0.35)] ";

const Finder = () => (
  <svg viewBox="0 0 60 60" className="size-[60px] rounded-[14px]">
    <defs><linearGradient id="fb" x2="0" y2="1"><stop stopColor="#5fc9f8" /><stop offset="1" stopColor="#2b62e8" /></linearGradient></defs>
    <rect width="60" height="60" fill="#e6e9ef" />
    <path d="M0 0h33q-7 13-8 35h9q0 13 4 25H0z" fill="url(#fb)" />
    <path d="M16 17v5M44 17v5" stroke="#1b2a40" strokeWidth="2.800" strokeLinecap="round" />
    <path d="M12 40q17 14 36 0" fill="none" stroke="#1b2030" strokeWidth="2" strokeLinecap="round" />
  </svg>
);
const Launchpad = () => (
  <div className={tile + "bg-[#c9ccd1]"}>
    <div className="grid grid-cols-3 gap-[3px]">
      <i className="size-[12px] rounded-[3px] bg-[#7ee04f]" /><i className="size-[12px] rounded-[3px] bg-[#f3bd3c]" /><i className="size-[12px] rounded-[3px] bg-[#ea8a35]" />
      <i className="size-[12px] rounded-[3px] bg-[#d8382c]" /><i className="size-[12px] rounded-[3px] bg-[#a5a8ad]" /><i className="size-[12px] rounded-[3px] bg-[#ee4a63]" />
      <i className="size-[12px] rounded-[3px] bg-[#a245cc]" /><i className="size-[12px] rounded-[3px] bg-[#3aa7f5]" /><i className="size-[12px] rounded-[3px] bg-[#54c9a0]" />
    </div>
  </div>
);
const Safari = () => (
  <div className={tile + "bg-linear-to-b from-white to-[#d8d8d8]"}>
    <svg viewBox="0 0 54 54" className="size-[54px]">
      <circle cx="27" cy="27" r="25.500" fill="#3f95ea" stroke="#3575d0" strokeWidth="1" />
      <circle cx="27" cy="27" r="22" fill="none" stroke="#bcdcf8" strokeWidth="3" strokeDasharray="0.800 1.900" />
      <path d="M43 13L30 30l-6-6z" fill="#e8473c" /><path d="M11 42l13-18 6 6z" fill="#f3f3f3" />
    </svg>
  </div>
);
const Office = ({ letter, l, grid }: { letter: string; l: string; grid: React.ReactNode }) => (
  <div className={tile + "bg-white"}>
    <svg viewBox="0 0 60 60" className="size-[60px]">
      {grid}
      <rect x="5" y="18" width="23" height="23" rx="2" fill={l} />
      <text x="16.500" y="36" fontSize="18" fontWeight="700" textAnchor="middle" fill="#fff" className="font-['Open_Sans']">{letter}</text>
    </svg>
  </div>
);
const Outlook = () => <Office letter="O" l="#1761b8" grid={<><rect x="17" y="10" width="30" height="39" rx="2" fill="#1c68bd" /><path d="M33 15h14v14H33z" fill="#50c8f5" /><path d="M24 22h14v12H24z" fill="#2a8ad8" /><path d="M17 32l16 10 16-10v17H17z" fill="#3f9be6" /><path d="M49 32v17H30z" fill="#2a7ad0" /></>} />;
const Word = () => <Office letter="W" l="#2253a8" grid={<><rect x="16" y="10" width="34" height="10" fill="#5ba3e8" /><rect x="16" y="20" width="34" height="10" fill="#3a78cf" /><rect x="16" y="30" width="34" height="10" fill="#2a5cb8" /><rect x="16" y="40" width="34" height="9" fill="#1f4088" /></>} />;
const Excel = () => <Office letter="X" l="#237a42" grid={<><rect x="16" y="10" width="34" height="39" fill="#2f6b43" /><rect x="16" y="10" width="17" height="20" fill="#47a066" /><rect x="33" y="10" width="17" height="10" fill="#63c283" /><rect x="33" y="20" width="17" height="10" fill="#4ba870" /><rect x="16" y="30" width="17" height="10" fill="#317a48" /></>} />;
const PowerPoint = () => <Office letter="P" l="#bf4325" grid={<><circle cx="32" cy="29.500" r="19.500" fill="#c9583a" /><path d="M32 10a19.500 19.500 0 0 1 19.500 19.500H32z" fill="#f29a7c" /><path d="M32 10v19.500H12.500A19.500 19.500 0 0 1 32 10z" fill="#e87050" /></>} />;
const Messages = () => (
  <div className={tile + "bg-linear-to-b from-[#86ee7a] to-[#4fb94a]"}>
    <svg viewBox="0 0 60 60" className="size-[60px]"><path d="M30 11c13 0 22 8 22 18s-9 18-22 18q-4 0-7-1-3 3-7 4 2-3 2-6C12 41 8 36 8 29 8 19 17 11 30 11z" fill="#edf8ec" /></svg>
  </div>
);
const MapsApp = () => (
  <svg viewBox="0 0 60 60" className="size-[60px] rounded-[14px]">
    <rect width="60" height="60" fill="#f2f2f0" /><path d="M0 0h14v24L0 12zM32 0h28v38L32 16z" fill="#6bcf6a" /><path d="M0 27l14 4v29H0z" fill="#e08ac6" /><path d="M16 0h13v38H16z" fill="#2f6fe4" /><circle cx="54" cy="6" r="14" fill="none" stroke="#d6d6d8" strokeWidth="5" />
    <path d="M32 20l28 22v18L32 38z" fill="#fff" /><path d="M28 42l24 18H28z" fill="#f6cf46" /><circle cx="22" cy="38" r="15" fill="#3478f0" stroke="#fff" strokeWidth="3" /><path d="M22 28l7 18-7-4-7 4z" fill="#fff" />
  </svg>
);
const petals = ["#f39b2d", "#f0d033", "#b5cf45", "#5cb874", "#5aa5d8", "#7a79c9", "#c467a0", "#ec5a4a"];
const Photos = () => (
  <div className={tile + "bg-[#fdfdfd]"}>
    <svg viewBox="0 0 60 60" className="size-[60px]">
      {petals.map((c, i) => <rect key={c} x="22.500" y="4" width="15" height="25" rx="7.500" fill={c} opacity="0.82" transform={`rotate(${i * 45} 30 30)`} />)}
      <circle cx="30" cy="30" r="2" fill="#444" />
    </svg>
  </div>
);
const FaceTime = () => (
  <div className={tile + "bg-linear-to-b from-[#86ee7a] to-[#4fb94a]"}>
    <svg viewBox="0 0 60 60" className="size-[60px]" fill="#eef8ed"><rect x="9" y="17" width="30" height="26" rx="6" /><path d="M41 26l9-7v23l-9-7z" /></svg>
  </div>
);
const Calendar = () => (
  <div className={tile + "flex-col !justify-start bg-[#fafafa]"}>
    <div className="flex h-[18px] w-full items-center justify-center bg-[#ea5f54] pt-[2px] text-[12px] font-bold leading-none text-white">JUL</div>
    <div className="flex flex-1 items-center text-[36px] font-light leading-none tracking-[-2px] text-[#1a1a1a]">19</div>
  </div>
);
const Notes = () => (
  <div className={tile + "flex-col !justify-start bg-linear-to-b from-[#f6f5f2] to-[#ececea]"}>
    <div className="h-[16px] w-full border-b border-[#b9933a] bg-linear-to-b from-[#fbdc72] to-[#f6c833]" />
    <div className="h-[2px] w-full border-b border-dotted border-[#aaa]" /><div className="mt-[11px] h-px w-full bg-[#d5d4d0]" /><div className="mt-[15px] h-px w-full bg-[#d5d4d0]" />
  </div>
);
const VsCode = () => (
  <div className={tile + "bg-white"}>
    <svg viewBox="0 0 44 44" className="size-[42px]"><path d="M3 11l4-3 25 20v9z" fill="#2b6fb8" /><path d="M3 33l4 3 25-20V7z" fill="#2378c4" /><path d="M31 1l11 5v32l-11 5z" fill="#409ae8" /><path d="M31 1v13L14 28l-5-5z" fill="#2a80d0" opacity="0.8" /></svg>
  </div>
);
const Skype = () => (
  <div className="relative flex size-[60px] items-center justify-center">
    <i className="absolute left-[2px] top-px size-[34px] rounded-full bg-[#3a9ce0]" /><i className="absolute bottom-px right-px size-[34px] rounded-full bg-[#2a80cc]" />
    <i className="absolute inset-[3px] rounded-full bg-linear-to-b from-[#4db3ee] to-[#2e7fd0]" />
    <span className="relative font-['Open_Sans'] text-[42px] font-bold leading-none text-white">S</span>
  </div>
);
const Discord = () => <div className={tile + "bg-[#6470ee]"}><FaDiscord className="size-[44px] text-white" /></div>;
const WhatsApp = () => <div className={tile + "bg-linear-to-b from-[#7fe578] to-[#50c240]"}><FaWhatsapp className="size-[52px] text-white" /></div>;
const Settings = () => (
  <div className={tile + "bg-linear-to-b from-[#cfdae2] to-[#8d8d8d]"}>
    <svg viewBox="0 0 60 60" className="size-[60px]" fill="none" stroke="#3a3a3c"><circle cx="30" cy="30" r="24" strokeWidth="5" strokeDasharray="2.300 1.300" /><circle cx="30" cy="30" r="20" fill="#8f9194" strokeWidth="5" /><circle cx="30" cy="30" r="13" stroke="#555" fill="#77797c" strokeWidth="4" /><path d="M30 30h20M30 30L20 13M30 30L20 47" strokeWidth="4" /><circle cx="30" cy="30" r="3.500" fill="#aaa" strokeWidth="2" /></svg>
  </div>
);
const Acrobat = () => (
  <div className={tile + "bg-[#a52418]"}>
    <svg viewBox="0 0 60 60" className="size-[60px]" fill="none" stroke="#fff" strokeWidth="2.800"><path d="M14 46c-3-3 3-8 12-10s22-3 23 0-5 4-12-2-10-14-9-19 5-3 4 2-8 25-14 30c-2 1.500-3 0-4-1z" /></svg>
  </div>
);
const Eclipse = () => (
  <svg viewBox="0 0 72 66" className="h-[66px] w-[72px] shrink-0"><circle cx="33" cy="33" r="32" fill="#f0943b" /><circle cx="40" cy="33" r="34" fill="#a85d58" /><circle cx="40" cy="33" r="32" fill="#2c2255" /><circle cx="40" cy="40" r="20" fill="#41358a" /><path d="M8 26h64v14H8z" fill="#2c2255" /><path d="M9 24h62v3.500H9zM8 31.500h64v3.500H8zM9 39h62v3.500H9z" fill="#fff" /></svg>
);
const Chrome = () => (
  <div className={tile + "bg-[#f8f6f5]"}>
    <svg viewBox="0 0 60 60" className="size-[60px]"><circle cx="30" cy="30" r="26" fill="#f6c244" /><path d="M30 17h22.500A26 26 0 0 0 7.500 17l11 13z" fill="#df4a3c" /><path d="M7.500 17A26 26 0 0 0 30 56l11-20-22 1z" fill="#469e53" /><path d="M52.500 17H30v13l11 6-11 20A26 26 0 0 0 52.500 17z" fill="#f6c244" /><circle cx="30" cy="30" r="12.500" fill="#fff" /><circle cx="30" cy="30" r="10" fill="#3f7de8" /></svg>
  </div>
);
const Spotify = () => <span className="relative flex size-[60px] items-center justify-center"><i className="absolute inset-[4px] rounded-full bg-[#111]" /><FaSpotify className="relative size-[61px] text-[#65d46e]" /></span>;
const Pear = () => (
  <div className={tile + "bg-white"}>
    <svg viewBox="0 0 60 60" className="size-[60px]" fill="none" stroke="#7cd463" strokeWidth="3.600" strokeLinecap="round"><ellipse cx="30" cy="38" rx="17" ry="14" /><path d="M8 32C8 18 13 7 22 7q7 0 6 6t-7 8M52 32C52 20 48 10 42 10q-8 0-9 12" /></svg>
  </div>
);
const Activity = () => (
  <div className={tile + "border-2 border-[#c2ccd0] bg-black p-[3px]"}>
    <svg viewBox="0 0 50 50" className="size-full rounded-[8px] bg-[#12241f]" fill="none"><path d="M0 10h50M0 20h50M0 30h50M0 40h50M10 0v50M20 0v50M30 0v50M40 0v50" stroke="#2c4a42" /><path d="M0 27h8l3-3 3 3 3-23 5 37 3-14h7l3-6 4 9 3-3h8" stroke="#7fd0bb" strokeWidth="1.800" /></svg>
  </div>
);
const Terminal = () => (
  <div className={tile + "border-2 border-[#c2ccd0] bg-black p-[3px]"}>
    <div className="size-full rounded-[8px] bg-[#222]"><svg viewBox="0 0 50 50" className="size-full" fill="none" stroke="#fff" strokeWidth="2.600"><path d="M6 8l8 4.500L6 17M17 20h10" /></svg></div>
  </div>
);
const Calculator = () => (
  <div className={tile + "bg-[#cacaca]"}>
    <div className="grid h-[48px] w-[34px] grid-cols-3 gap-x-[3px] gap-y-[3px] rounded-[5px] bg-[#2b2b2d] p-[4px]">
      <i className="col-span-3 h-[10px] rounded-[2px] bg-[#535357]" />
      {[0, 1].map((r) => <React.Fragment key={r}><i className="size-[7px] rounded-full bg-[#d3d3d3]" /><i className="size-[7px] rounded-full bg-[#d3d3d3]" /><i className="size-[7px] rounded-full bg-[#f29a3a]" /></React.Fragment>)}
      <i className="col-span-2 h-[7px] rounded-full bg-[#d3d3d3]" /><i className="size-[7px] rounded-full bg-[#f29a3a]" />
    </div>
  </div>
);
const Nord = () => (
  <div className={tile + "bg-linear-to-b from-[#6c9cf4] to-[#3a70e4]"}><i className="absolute size-[45px] rounded-full bg-white/15" /><NordPeak className="relative h-[28px] w-[36px]" fill="#fff" /></div>
);
const WebWeaver = () => (
  <div className={tile + "bg-[#fafafa]"}>
    <svg viewBox="0 0 60 60" className="size-[60px]" fill="none" stroke="#8c1f1b" strokeWidth="2.600"><path d="M30 50H12q-3 0-3-3V13q0-3 3-3h36q3 0 3 3v12M28 10L21 26 9 22M21 26L10 46M21 26l13 5M36 10l-8 18M51 20L21 26M42 10l-3 12M16 36l10-4 3 18" /><path d="M51 30q-3-3-9-3-7 0-7 5 0 4 8 6 8 1 8 6t-8 5q-6 0-8-2" stroke="#2a2a2c" strokeWidth="4.500" /></svg>
  </div>
);
const DockerApp = () => <div className={tile + "bg-[#4690e2]"}><FaDocker className="size-[48px] text-white" /></div>;
const Gimp = () => (
  <svg viewBox="0 0 68 64" className="h-[64px] w-[68px] shrink-0">
    <path d="M16 8q6 8 14 10 14 2 27-14 2 16-2 28-4 14-18 14-16 0-22-14Q10 20 16 8z" fill="#6b6354" />
    <path d="M57 4q-3 12-12 17 8 4 6 16 8-12 6-33z" fill="#4c463b" />
    <ellipse cx="8" cy="30" rx="7" ry="8" fill="#1a1a1a" /><circle cx="21" cy="24" r="6.500" fill="#fff" /><circle cx="36" cy="22" r="8.500" fill="#fff" /><circle cx="22" cy="25" r="3" /><circle cx="37" cy="24" r="3.500" /><path d="M42 38l14 12" stroke="#d99a5a" strokeWidth="3.500" /><path d="M54 47l6 3 6 12q-10-1-12-12z" fill="#222" />
  </svg>
);
const ZoomApp = () => (
  <div className={tile + "bg-linear-to-br from-[#2f62ee] to-[#1f57e8] font-['Open_Sans'] text-[17px] font-bold text-white"}>
    <Tracked w={42}>zoom</Tracked>
  </div>
);
const Postman = () => (
  <div className={tile + "bg-[#ef7546]"}>
    <svg viewBox="0 0 60 60" className="size-[60px]" fill="none" stroke="#fff"><circle cx="43.500" cy="17" r="5" strokeWidth="2.500" /><path d="M40 21L25 36l-3-1q4-10 14-16z" fill="#fff" strokeWidth="1.500" /><path d="M41 23q-2 8-12 15l-4-2z" fill="#fff" strokeWidth="1.500" /><path d="M25 37L12 49" strokeWidth="3.500" strokeLinecap="round" /></svg>
  </div>
);
const Folder = () => (
  <svg viewBox="0 0 64 68" className="h-[68px] w-[62px] shrink-0">
    <path d="M12 2h36l4 4v24H12z" fill="#eceef0" /><path d="M15 5h8v8h-8z" fill="#335" opacity=".7" /><path d="M30 6h16M30 10h16M15 18h30" stroke="#aab" strokeWidth="1.500" />
    <path d="M2 20q0-4 4-4h14l5 4h33q4 0 4 4v10H2z" fill="#3f93c6" /><path d="M2 25h60v37q0 5-5 5H7q-5 0-5-5z" fill="#7cc4f0" /><path d="M2 60h60" stroke="#5fb0e0" strokeWidth="1.500" />
  </svg>
);
const MiniWindow = () => (
  <svg viewBox="0 0 70 52" className="h-[52px] w-[70px] shrink-0 overflow-visible">
    <rect width="70" height="34" fill="#f7f6f5" /><rect width="12" height="34" fill="#e8e4df" /><path d="M18 5h48M18 9h46M18 13h47M18 17h45M18 21h46M18 25h38M18 29h30" stroke="#b8b8ba" strokeWidth="1.500" />
    <g transform="translate(46 28) scale(0.38)"><rect width="60" height="60" rx="14" fill="#e6e9ef" /><path d="M14 0h19q-7 13-8 35h9q0 13 4 25H14Q0 60 0 46V14Q0 0 14 0z" fill="#3a8cf0" /><path d="M16 17v6M44 17v6M12 40q17 14 36 0" fill="none" stroke="#1b2a40" strokeWidth="3" /></g>
  </svg>
);
const Trash = () => (
  <svg viewBox="0 0 54 68" className="h-[70px] w-[54px] shrink-0">
    <path d="M2 10L10 63q1 5 7 5h20q6 0 7-5L52 10z" fill="#d5d2d1" /><path d="M12 16l6 48M42 16l-6 48" stroke="#c6c2c1" strokeWidth="2" /><path d="M8 18l10 2-4 10 8 10-6 12M30 20l8 10-6 14 6 10" fill="none" stroke="#e2e0e0" strokeWidth="3" />
    <ellipse cx="27" cy="11" rx="25" ry="7" fill="#8e8a88" /><path d="M4 10l8-6 6 4 4-6 8 6 6-7 4 7 10 2-8 6-12 1-10-3-8 3z" fill="#f0efed" /><path d="M14 8l6 4-4 3zM30 6l6 5-8 3zM40 8l4 5-6 1z" fill="#3f4a55" />
    <ellipse cx="27" cy="11" rx="25" ry="7" fill="none" stroke="#e4e1e0" strokeWidth="1.500" />
  </svg>
);
const FirefoxApp = () => <div className={tile + "bg-[#201540]"}><FirefoxLogo className="size-[52px]" /></div>;

type DockApp = [React.ComponentType, boolean, string?];
const mainApps: DockApp[] = [
  [Finder, true], [Launchpad, false], [Safari, false], [Outlook, true], [FirefoxApp, true], [Messages, true, "1"], [MapsApp, true], [Photos, false], [FaceTime, false], [Calendar, true], [Notes, true], [VsCode, true],
  [Skype, true], [WhatsApp, true], [Discord, true, "1"], [Settings, true, "1"], [Word, true], [Excel, false], [PowerPoint, false], [Acrobat, true], [Eclipse, false], [Chrome, true], [Spotify, false], [Pear, true],
];
const moreApps: DockApp[] = [[Activity, true], [Terminal, true], [Calculator, true], [Nord, true], [WebWeaver, true], [DockerApp, true], [Gimp, true], [ZoomApp, true], [Postman, true]];
const shelf: DockApp[] = [[Folder, false], [MiniWindow, false], [Trash, false]];

function DockGroup({ apps, className }: { apps: DockApp[]; className: string }) {
  return (
    <div className={"flex " + className}>
      {apps.map(([Icon, running, badge], i) => (
        <div key={i} className="relative flex w-[60px] flex-col items-center">
          <div className="flex h-[60px] items-center justify-center"><Icon /></div>
          {running && <i className="mt-[9px] size-[8px] rounded-full bg-[#180305]" />}
          {badge && <span className="absolute -right-[9px] -top-[8px] flex size-[28px] items-center justify-center rounded-full bg-[#e5503f] text-[16px] text-white shadow">{badge}</span>}
        </div>
      ))}
    </div>
  );
}

function Dock() {
  return (
    <footer className="absolute left-[60px] top-[1858px] flex h-[97px] w-[2904px] rounded-[34px] border-2 border-white/20 bg-[linear-gradient(90deg,#5f6b7c_0%,#5e687a_16%,#8a5e68_21%,#a35c5c_27%,#b2605f_34%,#a4605a_38%,#c16655_44%,#cc6656_50%,#b8625a_57%,#a05f66_66%,#955d66_74%,#ab605f_81%,#bd6259_90%,#c96656_100%)] pl-[13px] pt-[13px]">
      <DockGroup apps={mainApps} className="gap-[18.350px]" />
      <i className="-mt-[3px] ml-[27px] h-[72px] w-[2px] bg-[#7e3438]" />
      <DockGroup apps={moreApps} className="ml-[25px] gap-[18.250px]" />
      <i className="-mt-[3px] ml-[27px] h-[72px] w-[2px] bg-[#7e2f2c]" />
      <DockGroup apps={shelf} className="ml-[25px] gap-[18.500px]" />
    </footer>
  );
}

export default function App() {
  return (
    <div className="relative h-[1964px] w-[3024px] overflow-hidden bg-[linear-gradient(100deg,#10233a_0%,#10233a_21%,#4a1015_33%,#5c1c14_36%,#a02e18_46%,#7a2218_56%,#4c1626_64%,#5a1a26_72%,#6a1c1c_85%,#8e2715_100%)] font-[Inter]">
      <div className="absolute right-0 top-[74px] h-[260px] w-[60px] bg-[linear-gradient(#1f4a73,#a0683f_40%,#3a2418_100%)]" />
      <MenuBar />
      <BackgroundWindows />
      <BrowserWindow />
      <Dock />
    </div>
  );
}
